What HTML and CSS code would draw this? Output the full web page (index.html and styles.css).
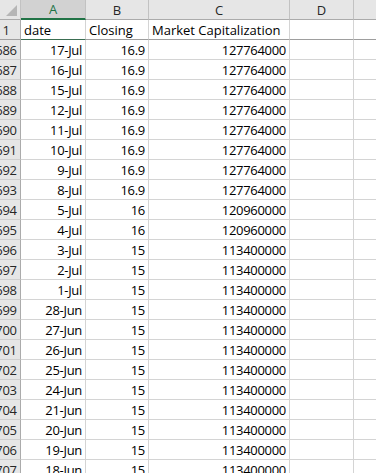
FILE: index.html
```html
<!DOCTYPE html>
<html>
<head>
<meta charset="utf-8">
<link rel="stylesheet" href="styles.css">
</head>
<body>
<div class="sheet">
  <div class="corner"><span class="tri"></span></div>
  <div class="colhdr sel">A</div>
  <div class="colhdr">B</div>
  <div class="colhdr">C</div>
  <div class="colhdr">D</div>
  <div class="colhdr last"></div>

  <div class="rowhdr frz"><span>1</span></div>
  <div class="cell txt frz frzA">date</div>
  <div class="cell txt frz">Closing</div>
  <div class="cell txt frz">Market Capitalization</div>
  <div class="cell frz"></div>
  <div class="cell frz last"></div>
</div>
<script>
const rows = [
 ["686","17-Jul","16.9","127764000"],
 ["687","16-Jul","16.9","127764000"],
 ["688","15-Jul","16.9","127764000"],
 ["689","12-Jul","16.9","127764000"],
 ["690","11-Jul","16.9","127764000"],
 ["691","10-Jul","16.9","127764000"],
 ["692","9-Jul","16.9","127764000"],
 ["693","8-Jul","16.9","127764000"],
 ["694","5-Jul","16","120960000"],
 ["695","4-Jul","16","120960000"],
 ["696","3-Jul","15","113400000"],
 ["697","2-Jul","15","113400000"],
 ["698","1-Jul","15","113400000"],
 ["699","28-Jun","15","113400000"],
 ["700","27-Jun","15","113400000"],
 ["701","26-Jun","15","113400000"],
 ["702","25-Jun","15","113400000"],
 ["703","24-Jun","15","113400000"],
 ["704","21-Jun","15","113400000"],
 ["705","20-Jun","15","113400000"],
 ["706","19-Jun","15","113400000"],
 ["707","18-Jun","15","113400000"]
];
const sheet = document.querySelector('.sheet');
for (const r of rows) {
  const h = document.createElement('div'); h.className='rowhdr';
  const s = document.createElement('span'); s.textContent = r[0]; h.appendChild(s);
  sheet.appendChild(h);
  for (let i=1;i<4;i++){ const c=document.createElement('div'); c.className='cell num'; c.textContent=r[i]; sheet.appendChild(c); }
  const d=document.createElement('div'); d.className='cell'; sheet.appendChild(d);
  const e=document.createElement('div'); e.className='cell last'; sheet.appendChild(e);
}
</script>
</body>
</html>
```

FILE: styles.css
```css
html, body {
  margin: 0;
  padding: 0;
  background: #ffffff;
  overflow: hidden;
}
.sheet {
  display: grid;
  grid-template-columns: 21px 65px 63px 141px 64px 64px;
  grid-template-rows: 20px;
  grid-auto-rows: 20px;
  font-family: "Open Sans", "Liberation Sans", sans-serif;
  font-size: 13px;
  color: #000;
}
.corner {
  background: #e6e6e6;
  border-right: 1px solid #c2c2c2;
  border-bottom: 1px solid #ababab;
  box-sizing: border-box;
  position: relative;
}
.tri {
  position: absolute;
  right: 3px;
  bottom: 3px;
  width: 0;
  height: 0;
  border-left: 11px solid transparent;
  border-bottom: 11px solid #b6b6b6;
}
.colhdr {
  background: #e6e6e6;
  border-right: 1px solid #c2c2c2;
  border-bottom: 1px solid #ababab;
  box-sizing: border-box;
  display: flex;
  align-items: center;
  justify-content: center;
  color: #262626;
  font-size: 13px;
}
.colhdr.sel {
  background: #d2d2d2;
  color: #217346;
  border-bottom: 2px solid #217346;
}
.rowhdr {
  background: #e6e6e6;
  border-right: 1px solid #ababab;
  border-bottom: 1px solid #cfcfcf;
  box-sizing: border-box;
  overflow: hidden;
  display: flex;
  align-items: center;
  color: #262626;
}
.rowhdr span {
  flex: 0 0 28px;
  margin-left: -8px;
  text-align: center;
  letter-spacing: -0.3px;
}
.cell {
  border-right: 1px solid #d4d4d4;
  border-bottom: 1px solid #d4d4d4;
  box-sizing: border-box;
  display: flex;
  align-items: center;
  white-space: nowrap;
  padding: 0 3px;
}
.cell.num {
  justify-content: flex-end;
  letter-spacing: -0.3px;
}
.cell.txt { justify-content: flex-start; }
.frz { border-bottom: 1px solid #9e9e9e; }
.frzA { border-bottom: 1px solid #3b6e52; }
.last { border-right: none; }
```
